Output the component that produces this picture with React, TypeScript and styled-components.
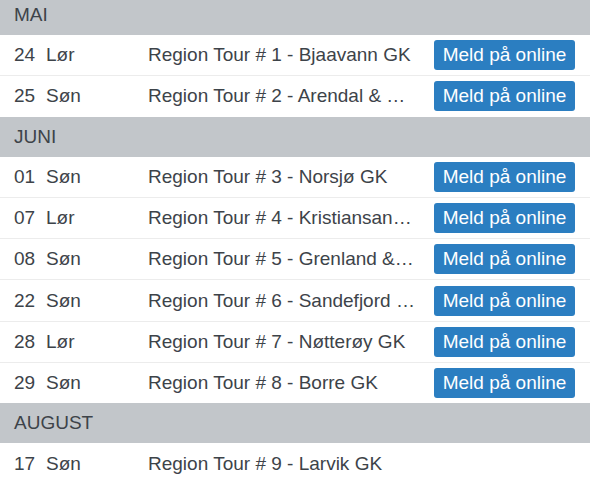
import styled, { createGlobalStyle } from "styled-components";

const GlobalStyle = createGlobalStyle`
  html, body {
    margin: 0;
    padding: 0;
    background: #ffffff;
    overflow: hidden;
  }
  body {
    font-family: "Liberation Sans", Arial, Helvetica, sans-serif;
    color: #3d4349;
  }
`;

const Page = styled.div`
  margin-top: -5px;
  width: 590px;
`;

const MonthHeader = styled.div`
  height: 40px;
  display: flex;
  align-items: center;
  padding-left: 14px;
  background: #c2c6ca;
  font-size: 19px;
  color: #3d4349;
`;

const Row = styled.div`
  height: 40.3px;
  display: flex;
  align-items: center;
  padding: 0 15px 0 14px;
  background: #ffffff;
  border-bottom: 1px solid #ececec;
  font-size: 19px;

  &:last-child {
    border-bottom: none;
  }
`;

const DateCell = styled.div`
  width: 134px;
  flex-shrink: 0;
  display: flex;
  white-space: nowrap;
`;

const DayNum = styled.span`
  width: 32px;
`;

const Title = styled.div`
  flex: 1;
  min-width: 0;
  overflow: hidden;
  white-space: nowrap;
  text-overflow: ellipsis;
`;

const SignUp = styled.button`
  flex-shrink: 0;
  margin-left: 15px;
  width: 141px;
  height: 30px;
  padding: 0;
  border: none;
  border-radius: 3px;
  background: #2b7ec1;
  color: #ffffff;
  font-family: inherit;
  font-size: 19px;
  line-height: 30px;
  text-align: center;
  white-space: nowrap;
  cursor: pointer;
`;

type Event = {
  date: string;
  day: string;
  title: string;
  online: boolean;
};

type Month = {
  name: string;
  events: Event[];
};

const months: Month[] = [
  {
    name: "MAI",
    events: [
      { date: "24", day: "Lør", title: "Region Tour # 1 - Bjaavann GK", online: true },
      { date: "25", day: "Søn", title: "Region Tour # 2 - Arendal & Omegn GK", online: true },
    ],
  },
  {
    name: "JUNI",
    events: [
      { date: "01", day: "Søn", title: "Region Tour # 3 - Norsjø GK", online: true },
      { date: "07", day: "Lør", title: "Region Tour # 4 - Kristiansand GK", online: true },
      { date: "08", day: "Søn", title: "Region Tour # 5 - Grenland & Omegn GK", online: true },
      { date: "22", day: "Søn", title: "Region Tour # 6 - Sandefjord Golfklubb", online: true },
      { date: "28", day: "Lør", title: "Region Tour # 7 - Nøtterøy GK", online: true },
      { date: "29", day: "Søn", title: "Region Tour # 8 - Borre GK", online: true },
    ],
  },
  {
    name: "AUGUST",
    events: [
      { date: "17", day: "Søn", title: "Region Tour # 9 - Larvik GK", online: false },
    ],
  },
];

export default function App() {
  return (
    <Page>
      <GlobalStyle />
      {months.map((month) => (
        <section key={month.name}>
          <MonthHeader>{month.name}</MonthHeader>
          {month.events.map((ev) => (
            <Row key={ev.date + ev.title}>
              <DateCell>
                <DayNum>{ev.date}</DayNum>
                <span>{ev.day}</span>
              </DateCell>
              <Title>{ev.title}</Title>
              {ev.online && <SignUp>Meld på online</SignUp>}
            </Row>
          ))}
        </section>
      ))}
    </Page>
  );
}
